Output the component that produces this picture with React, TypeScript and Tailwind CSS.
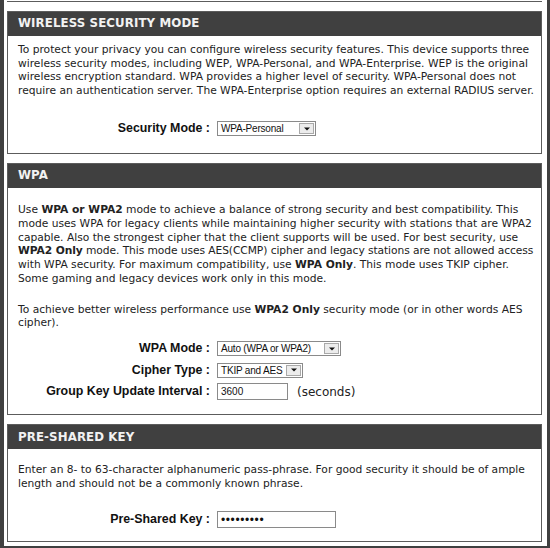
import type { ReactNode } from 'react';

const body = "font-['DejaVu_Sans',Verdana,sans-serif] text-[10.7px] leading-[13.7px] text-[#222]";

function Panel({ title, children }: { title: string; children: ReactNode }) {
  return (
    <div className="border border-[#5c5c5c] bg-white">
      <div className="h-[24px] bg-[#404040] px-[10px] flex items-center font-['DejaVu_Sans',Verdana,sans-serif] font-bold text-[11.8px] text-[#f2f2f2] tracking-[0.1px]">
        {title}
      </div>
      {children}
    </div>
  );
}

function Select({ value, width }: { value: string; width: string }) {
  return (
    <div className={`${width} h-[15px] border border-[#8a8a8a] bg-white flex items-center justify-between pl-[3px] pr-[1px]`}>
      <span className="font-['Liberation_Sans',Arial,sans-serif] text-[10px] tracking-[-0.2px] text-[#111] whitespace-nowrap">{value}</span>
      <span className="w-[15px] h-[11px] border border-[#a9a9a9] bg-[#ececec] flex items-center justify-center">
        <svg width="6" height="4" viewBox="0 0 6 4">
          <path d="M0 0.5 L6 0.5 L3 3.5 Z" fill="#111" />
        </svg>
      </span>
    </div>
  );
}

function Row({ label, children }: { label: string; children: ReactNode }) {
  return (
    <div className="h-[21.5px] flex items-center">
      <div className="w-[202px] text-right font-['Liberation_Sans',Arial,sans-serif] font-bold text-[12.4px] leading-[15px] text-[#111] whitespace-nowrap">
        {label}
      </div>
      <div className="ml-[7px] flex items-center">{children}</div>
    </div>
  );
}

export default function App() {
  return (
    <div className="w-[550px] h-[548px] bg-[#404040] overflow-hidden">
      <div className="ml-[4px] w-[543px] h-[546px] bg-white pl-[3px] pr-[5px] flex flex-col gap-[9px]">
        <div className="h-[2px] border-b border-[#5c5c5c]" />

        <Panel title="WIRELESS SECURITY MODE">
          <div className={`${body} px-[10px] pt-[7px] whitespace-nowrap`}>
            To protect your privacy you can configure wireless security features. This device supports three
            <br />
            wireless security modes, including WEP, WPA-Personal, and WPA-Enterprise. WEP is the original
            <br />
            wireless encryption standard. WPA provides a higher level of security. WPA-Personal does not
            <br />
            require an authentication server. The WPA-Enterprise option requires an external RADIUS server.
          </div>
          <div className="pt-[20px] pb-[14px]">
            <Row label="Security Mode :">
              <Select value="WPA-Personal" width="w-[99px]" />
            </Row>
          </div>
        </Panel>

        <Panel title="WPA">
          <div className={`${body} px-[10px] pt-[15px] whitespace-nowrap`}>
            <p>
              Use <b>WPA or WPA2</b> mode to achieve a balance of strong security and best compatibility. This
              <br />
              mode uses WPA for legacy clients while maintaining higher security with stations that are WPA2
              <br />
              capable. Also the strongest cipher that the client supports will be used. For best security, use
              <br />
              <span className="tracking-[-0.08px]">
                <b>WPA2 Only</b> mode. This mode uses AES(CCMP) cipher and legacy stations are not allowed access
              </span>
              <br />
              with WPA security. For maximum compatibility, use <b>WPA Only</b>. This mode uses TKIP cipher.
              <br />
              Some gaming and legacy devices work only in this mode.
            </p>
            <p className="mt-[17px]">
              To achieve better wireless performance use <b>WPA2 Only</b> security mode (or in other words AES
              <br />
              cipher).
            </p>
          </div>
          <div className="pt-[8px] pb-[12px] flex flex-col">
            <Row label="WPA Mode :">
              <Select value="Auto (WPA or WPA2)" width="w-[124px]" />
            </Row>
            <Row label="Cipher Type :">
              <Select value="TKIP and AES" width="w-[86px]" />
            </Row>
            <Row label="Group Key Update Interval :">
              <div className="w-[71px] h-[17px] border border-[#8a8a8a] bg-white flex items-center pl-[3px] font-['Liberation_Sans',Arial,sans-serif] text-[10px] text-[#111]">
                3600
              </div>
              <span className="ml-[9px] font-['DejaVu_Sans',Verdana,sans-serif] text-[12px] text-[#222]">(seconds)</span>
            </Row>
          </div>
        </Panel>

        <Panel title="PRE-SHARED KEY">
          <div className={`${body} px-[10px] pt-[14px] whitespace-nowrap`}>
            Enter an 8- to 63-character alphanumeric pass-phrase. For good security it should be of ample
            <br />
            length and should not be a commonly known phrase.
          </div>
          <div className="pt-[18px] pb-[11px]">
            <Row label="Pre-Shared Key :">
              <div className="w-[119px] h-[17px] border border-[#8a8a8a] bg-white flex items-center pl-[3px] font-['Liberation_Sans',Arial,sans-serif] text-[12px] tracking-[0.6px] text-[#111]">
                •••••••••
              </div>
            </Row>
          </div>
        </Panel>
      </div>
    </div>
  );
}
